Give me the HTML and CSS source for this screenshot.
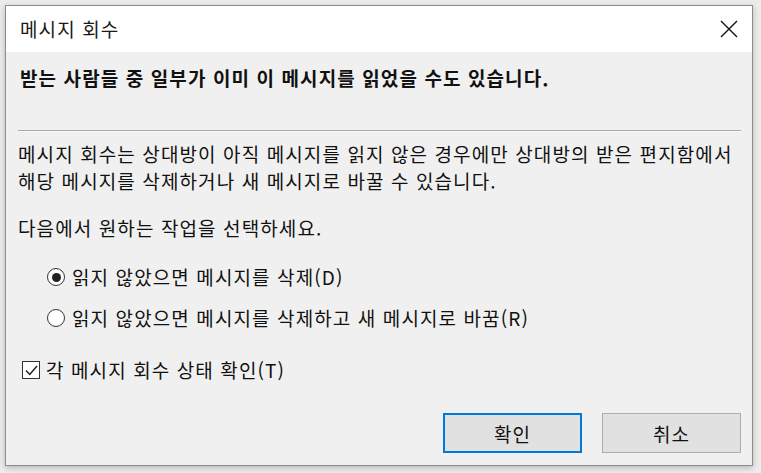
FILE: index.html
```html
<!DOCTYPE html>
<html lang="ko">
<head>
<meta charset="utf-8">
<title>메시지 회수</title>
<link rel="stylesheet" href="styles.css">
</head>
<body>
<div class="window">
  <div class="titlebar">
    <span class="title">메시지 회수</span>
    <svg class="close" width="18" height="18" viewBox="0 0 18 18"><path d="M1 1 L17 17 M17 1 L1 17" stroke="#111" stroke-width="1.4" fill="none"/></svg>
  </div>
  <div class="content">
    <p class="heading">받는 사람들 중 일부가 이미 이 메시지를 읽었을 수도 있습니다.</p>
    <div class="sep"></div>
    <p class="para">메시지 회수는 상대방이 아직 메시지를 읽지 않은 경우에만 상대방의 받은 편지함에서<br>해당 메시지를 삭제하거나 새 메시지로 바꿀 수 있습니다.</p>
    <p class="prompt">다음에서 원하는 작업을 선택하세요.</p>
    <div class="options">
      <div class="opt"><span class="radio checked"></span><span>읽지 않았으면 메시지를 삭제(D)</span></div>
      <div class="opt"><span class="radio"></span><span>읽지 않았으면 메시지를 삭제하고 새 메시지로 바꿈(R)</span></div>
    </div>
    <div class="check"><span class="box"><svg width="15" height="15" viewBox="0 0 15 15"><path d="M2 7.5 L5.8 11.5 L13 3" stroke="#222" stroke-width="1.5" fill="none"/></svg></span><span>각 메시지 회수 상태 확인(T)</span></div>
    <div class="buttons">
      <div class="btn default">확인</div>
      <div class="btn">취소</div>
    </div>
  </div>
</div>
</body>
</html>
```
FILE: styles.css
```css
html, body {
  margin: 0;
  padding: 0;
}
body {
  width: 761px;
  height: 473px;
  background: #ececec;
  font-family: "Noto Sans CJK KR", "Noto Sans", sans-serif;
  color: #111;
  overflow: hidden;
  letter-spacing: 1.1px;
}
.window {
  margin: 5px 0 0 5px;
  width: 748px;
  height: 461px;
  border: 1px solid #8c8c8c;
  background: #f0f0f0;
  box-shadow: 0 2px 6px rgba(0,0,0,0.22);
  display: flex;
  flex-direction: column;
  box-sizing: border-box;
}
.titlebar {
  height: 46px;
  background: #fff;
  display: flex;
  align-items: center;
  justify-content: space-between;
  padding: 0 14px 0 14px;
  flex: none;
}
.title {
  font-size: 19px;
  line-height: 24px;
  color: #1a1a1a;
}
.close {
  display: block;
}
.content {
  flex: 1;
  padding: 0 11px 0 12px;
  display: flex;
  flex-direction: column;
  font-size: 19px;
}
.heading {
  margin: 13px 0 0 2px;
  font-weight: bold;
  line-height: 26px;
}
.sep {
  margin-top: 39px;
  height: 1px;
  background: #a8a8a8;
  border-bottom: 1px solid #fafafa;
}
.para {
  margin: 8px 0 0 0;
  line-height: 27px;
}
.prompt {
  margin: 20px 0 0 0;
  line-height: 27px;
}
.options {
  margin: 23px 0 0 29px;
  display: flex;
  flex-direction: column;
  gap: 15px;
}
.opt {
  display: flex;
  align-items: center;
  gap: 7px;
  line-height: 26px;
}
.radio {
  width: 16px;
  height: 16px;
  border: 1px solid #333;
  border-radius: 50%;
  background: #fff;
  display: flex;
  align-items: center;
  justify-content: center;
  flex: none;
}
.radio.checked::after {
  content: "";
  width: 9px;
  height: 9px;
  border-radius: 50%;
  background: #222;
}
.check {
  margin: 26px 0 0 4px;
  display: flex;
  align-items: center;
  gap: 6px;
  line-height: 26px;
}
.box {
  width: 16px;
  height: 16px;
  border: 1px solid #333;
  background: #fff;
  display: flex;
  align-items: center;
  justify-content: center;
  flex: none;
}
.box svg { display: block; }
.buttons {
  margin-top: auto;
  margin-bottom: 12px;
  display: flex;
  justify-content: flex-end;
  gap: 20px;
}
.btn {
  width: 139px;
  height: 40px;
  box-sizing: border-box;
  border: 1px solid #adadad;
  background: #e1e1e1;
  display: flex;
  align-items: center;
  justify-content: center;
  font-size: 19px;
}
.btn.default {
  border: 2px solid #0078d7;
}
```
